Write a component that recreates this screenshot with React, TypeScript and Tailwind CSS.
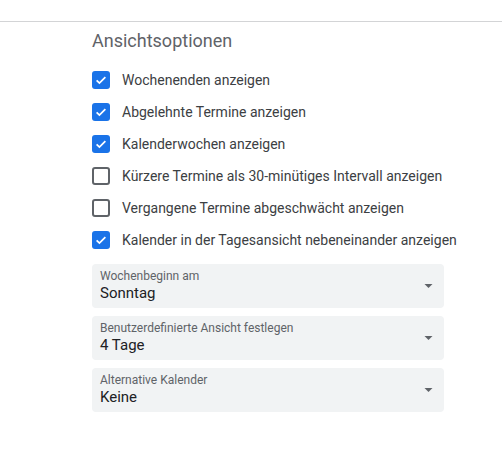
const options = [
  { label: "Wochenenden anzeigen", checked: true },
  { label: "Abgelehnte Termine anzeigen", checked: true },
  { label: "Kalenderwochen anzeigen", checked: true },
  { label: "Kürzere Termine als 30-minütiges Intervall anzeigen", checked: false },
  { label: "Vergangene Termine abgeschwächt anzeigen", checked: false },
  { label: "Kalender in der Tagesansicht nebeneinander anzeigen", checked: true },
];

const selects = [
  { label: "Wochenbeginn am", value: "Sonntag" },
  { label: "Benutzerdefinierte Ansicht festlegen", value: "4 Tage" },
  { label: "Alternative Kalender", value: "Keine" },
];

function Checkbox({ checked }: { checked: boolean }) {
  if (checked) {
    return (
      <span className="flex h-[18px] w-[18px] items-center justify-center rounded-[3px] bg-[#1a73e8]">
        <svg width="14" height="14" viewBox="0 0 24 24" fill="none">
          <path d="M4.5 12.5l4.8 4.8L19.5 7" stroke="#fff" strokeWidth="3" />
        </svg>
      </span>
    );
  }
  return <span className="h-[18px] w-[18px] rounded-[3px] border-2 border-[#5f6368]" />;
}

export default function App() {
  return (
    <div className="h-[452px] w-[502px] bg-white font-['Roboto',sans-serif]">
      <div className="h-[21px]" />
      <div className="h-px bg-[#d3d4d6]" />
      <div className="pl-[92px] pt-[7px]">
        <h2 className="text-[18px] leading-[24px] text-[#5f6368]">Ansichtsoptionen</h2>
        <div className="mt-[11px] flex flex-col">
          {options.map((o) => (
            <label key={o.label} className="flex h-[32px] items-center gap-[12px]">
              <Checkbox checked={o.checked} />
              <span className="text-[14px] text-[#3c4043]">{o.label}</span>
            </label>
          ))}
        </div>
        <div className="mt-[8px] flex w-[352px] flex-col gap-[8px]">
          {selects.map((s) => (
            <div
              key={s.label}
              className="flex h-[44px] items-center justify-between rounded-[4px] bg-[#f1f3f4] pl-[8px] pr-[8px]"
            >
              <div className="flex flex-col">
                <span className="text-[12px] leading-[14px] text-[#5f6368]">{s.label}</span>
                <span className="text-[15px] leading-[20px] text-[#202124]">{s.value}</span>
              </div>
              <svg width="9" height="4" viewBox="0 0 10 5" className="mr-[3px]">
                <path d="M0 0h10L5 5z" fill="#5f6368" />
              </svg>
            </div>
          ))}
        </div>
      </div>
    </div>
  );
}
